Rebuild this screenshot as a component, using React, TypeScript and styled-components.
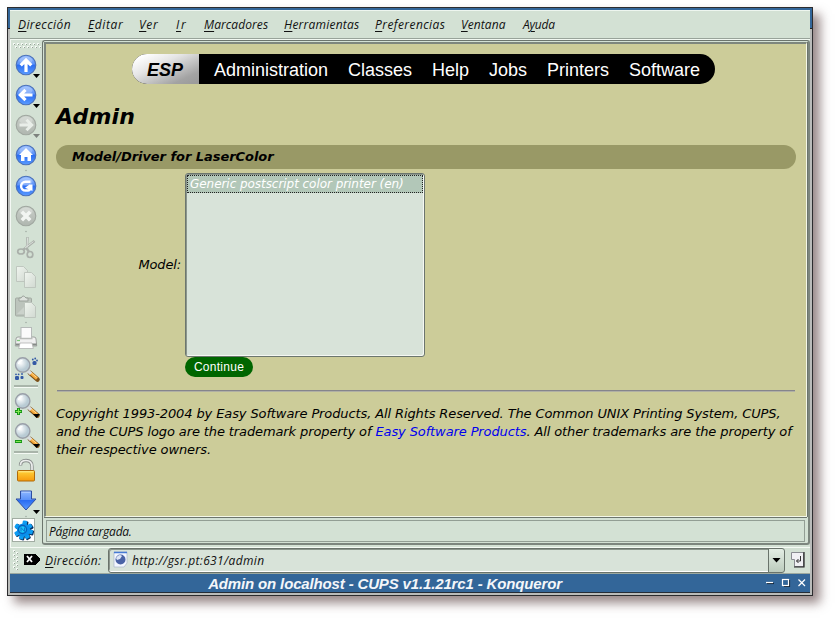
import React from 'react';
import styled, { createGlobalStyle } from 'styled-components';

const GlobalStyle = createGlobalStyle`
  * { box-sizing: border-box; }
  body { margin: 0; background: #fff; overflow: hidden; }
`;

const mint = '#d3e1d4';
const uiFont = "'Open Sans', 'Noto Sans', sans-serif";
const pageFont = "'DejaVu Sans', sans-serif";

const Desktop = styled.div`
  width: 836px;
  height: 619px;
  padding: 7px;
  background: #fff;
`;

const Window = styled.main`
  width: 806px;
  height: 589px;
  padding: 2px;
  display: flex;
  flex-direction: column;
  border: 1px solid #2c2c2e;
  background: linear-gradient(#336699 20px, #222 20px, #222 21px, #babcba 21px);
  box-shadow: 7px 7px 10px rgba(73, 45, 45, 0.57);
`;

const MenuBar = styled.nav`
  height: 30px;
  flex: none;
  display: flex;
  padding: 4px 0 0 8px;
  background: ${mint};
  border-top: 1px solid #eef6ef;
  border-bottom: 1px solid #f1f8f1;
  box-shadow: inset 0 -1px #98a39a;
`;

const MenuItem = styled.span<{ $width: number; $spacing: number }>`
  width: ${p => p.$width}px;
  flex: none;
  white-space: nowrap;
  font: italic 12px/19px ${uiFont};
  letter-spacing: ${p => p.$spacing}px;
  color: #111;
`;

const Accel = styled.span`
  text-decoration: underline;
  text-underline-offset: 2px;
  text-decoration-thickness: 1px;
`;

const Middle = styled.div`
  height: 507px;
  flex: none;
  display: flex;
  background: ${mint};
`;

const ToolBar = styled.aside`
  width: 32px;
  flex: none;
  display: flex;
  flex-direction: column;
  border-left: 1px solid #f4f8f4;
`;

const Slot = styled.div<{ $height: number }>`
  height: ${p => p.$height}px;
  flex: none;
  svg { display: block; margin-left: -1px; overflow: visible; }
`;

const Divider = styled.div`
  height: 6px;
  padding-top: 1px;
  &::after {
    content: '';
    display: block;
    height: 2px;
    margin: 0 4px 0 3px;
    background: #a9b5aa;
    border-bottom: 1px solid #f4faf4;
  }
`;

const GearBox = styled.div`
  width: 23px;
  height: 24px;
  margin: 3px 0 0 1px;
  background: #fff;
  border: 1px solid #a1aca2;
`;

const Frame = styled.section`
  width: 768px;
  height: 505px;
  flex: none;
  padding: 1px 0 1px 1px;
  border: 1px solid #6c756d;
  border-right: 2px solid #7c867e;
  border-bottom: 2px solid #7c867e;
  border-radius: 3px;
`;

const Page = styled.article`
  height: 475px;
  margin-right: 1px;
  padding: 10px 10px 0;
  font: italic 13px/18px ${pageFont};
  color: #000;
  background: #cccc99;
  border: 2px solid #7d867d;
  border-right: 1px solid #f4f8e8;
  border-bottom: 1px solid #f4f8e8;
  box-shadow: 0 1px #6c756d, 1px 0 #6c756d;
`;

const Nav = styled.nav`
  width: 583px;
  height: 30px;
  margin-left: 76px;
  display: flex;
  overflow: hidden;
  border-radius: 15px;
  background: #000;
  color: #fff;
  font: normal 18px/33px 'Liberation Sans', sans-serif;
`;

const Brand = styled.b`
  width: 67px;
  padding-left: 15px;
  margin-right: 15px;
  color: #000;
  background: linear-gradient(155deg, #fff 10%, #e5e5e5 38%, #a3a3a3 80%, #999);
  font: italic bold 18px/32px 'Liberation Sans', sans-serif;
`;

const NavLink = styled.span<{ $width: number }>`
  width: ${p => p.$width}px;
  flex: none;
  white-space: nowrap;
`;

const Heading = styled.h1`
  margin: 20px 0 0;
  font: italic bold 22px/26px ${pageFont};
  letter-spacing: 0.2px;
`;

const Section = styled.h2`
  height: 24px;
  margin: 15px 0 4px;
  padding-left: 16px;
  border-radius: 12px;
  background: #999966;
  font: italic bold 13px/23px ${pageFont};
  letter-spacing: -0.05px;
`;

const FormRow = styled.div`
  display: flex;
  align-items: center;
`;

const Label = styled.label`
  width: 129px;
  padding-right: 4px;
  text-align: right;
  letter-spacing: -0.15px;
`;

const ListBox = styled.div`
  width: 240px;
  height: 184px;
  padding: 1px;
  border: 1px solid #6c766e;
  border-radius: 3px;
  background: #d8e3d9;
  box-shadow: inset -1px -1px #f5f8f3, inset 1px 1px #8b968d;
`;

const Option = styled.div`
  height: 18px;
  padding-left: 2px;
  white-space: nowrap;
  font: italic 12px/17px ${pageFont};
  letter-spacing: -0.05px;
  color: #fff;
  background: #b2c7b8;
  border: 1px dotted #222;
`;

const Continue = styled.button`
  display: block;
  width: 68px;
  height: 20px;
  margin-left: 129px;
  padding: 0;
  border: 0;
  border-radius: 10px;
  color: #fff;
  background: #006600;
  font: 12px/20px 'Liberation Sans', sans-serif;
  letter-spacing: 0.27px;
`;

const Rule = styled.hr`
  height: 2px;
  margin: 13px 1px 13px 1px;
  border: 0;
  border-top: 1px solid #85858c;
  background: #b0b0a4;
`;

const Copyright = styled.p`
  margin: 0;
  white-space: nowrap;
  letter-spacing: -0.11px;
`;

const Link = styled.a`
  color: #0000ee;
`;

const Status = styled.footer`
  height: 22px;
  margin: 3px 3px 0 2px;
  padding-left: 2px;
  border: 1px solid #929e94;
  font: italic 12px/21px ${uiFont};
  letter-spacing: -0.25px;
  color: #111;
`;

const LocationBar = styled.div`
  height: 27px;
  flex: none;
  display: flex;
  align-items: flex-start;
  background: ${mint};
  border-top: 1px solid #f4faf4;
  border-bottom: 1px solid #9da99f;
  svg { flex: none; display: block; }
`;

const LocationLabel = styled.span`
  width: 63px;
  flex: none;
  font: italic 12px/25px ${uiFont};
  letter-spacing: 0.4px;
  color: #111;
`;

const Address = styled.div`
  width: 661px;
  height: 25px;
  margin-right: -1px;
  display: flex;
  padding-left: 3px;
  border: 1px solid #69736b;
  border-radius: 3px 0 0 3px;
  background: #d8e3d9;
  box-shadow: inset 0 -1px #fff, inset 1px 1px #8a958c;
  font: italic 12px/24px ${uiFont};
  color: #111;
`;

const UrlText = styled.span`
  margin-left: 3px;
  letter-spacing: 0.35px;
`;

const DropButton = styled.div`
  width: 17px;
  height: 25px;
  margin-right: 4px;
  border: 1px solid #69736b;
  border-radius: 0 3px 3px 0;
  background: linear-gradient(#e3eee4, #bccbbd);
`;

const TitleBar = styled.header`
  height: 19px;
  flex: none;
  display: flex;
  background: #336699;
  border-bottom: 1px solid #252d37;
`;

const Title = styled.div`
  width: 750px;
  text-align: center;
  color: #f4f6f9;
  font: italic bold 15px/20px 'Liberation Sans', sans-serif;
  letter-spacing: -0.15px;
`;

const Gradients = () => (
  <svg width="0" height="0">
    <defs>
      <linearGradient id="blue" x2="0" y2="1"><stop stopColor="#8db7ff" /><stop offset=".45" stopColor="#5d93f8" /><stop offset=".5" stopColor="#2a6df2" /><stop offset="1" stopColor="#5b9cff" /></linearGradient>
      <linearGradient id="grey" x2="0" y2="1"><stop stopColor="#c9cfc9" /><stop offset="1" stopColor="#afb6af" /></linearGradient>
      <linearGradient id="paper" x2="1" y2="1"><stop stopColor="#f0f5ef" /><stop offset="1" stopColor="#d1d9d1" /></linearGradient>
      <radialGradient id="lens" cx=".35" cy=".35"><stop stopColor="#fff" /><stop offset="1" stopColor="#b9cbd4" /></radialGradient>
      <linearGradient id="gold" x2="0" y2="1"><stop stopColor="#ffd33a" /><stop offset="1" stopColor="#f79a0d" /></linearGradient>
    </defs>
  </svg>
);

const Caret = ({ dim }: { dim?: boolean }) => <path d="M23 24h7l-3.5 4z" fill={dim ? '#7d827e' : '#000'} />;
const Dot = () => <circle cx="16" cy="30.5" r=".7" fill="#98a399" />;

const Disc = ({ off, children }: { off?: boolean; children: React.ReactNode }) => (
  <g>
    <circle cx="16" cy="15" r="9.8" fill={off ? 'url(#grey)' : 'url(#blue)'} stroke={off ? '#9fa69f' : '#4a70b8'} strokeWidth="1.1" />
    <ellipse cx="16" cy="10.5" rx="6.5" ry="4" fill="#fff" opacity=".25" />
    {children}
  </g>
);

const Magnifier = () => (
  <g>
    <path d="M20 19l7.5 6.5" stroke="#7b5018" strokeWidth="4.6" strokeLinecap="round" />
    <path d="M20.5 19l6.5 5.7" stroke="#f6a838" strokeWidth="3" />
    <path d="M20.5 18.2l6 5.2" stroke="#ffd891" strokeWidth="1" />
    <path d="M18 17l3 2.8" stroke="#d9dde0" strokeWidth="3.4" />
    <circle cx="12.7" cy="11" r="7.2" fill="url(#lens)" stroke="#9a9fa8" strokeWidth="1.4" />
    <path d="M8.5 10q1-3.5 4-3.5" stroke="#fff" fill="none" strokeWidth="1.5" />
  </g>
);

const leaf = (x: number, y: number) => (
  <path transform={`translate(${x} ${y})`} d="M0 0h7l4 4v11H0z" fill="url(#paper)" stroke="#bbc3bb" strokeWidth=".9" />
);

const drawings: Record<string, React.ReactNode> = {
  up: <><Disc><path d="M16 22v-11M10.7 15.3L16 10l5.3 5.3" fill="none" stroke="#fff" strokeWidth="3.2" /></Disc><Caret /></>,
  back: <><Disc><path d="M22.5 15H11M15.5 9.8L10.3 15l5.2 5.2" fill="none" stroke="#fff" strokeWidth="3.2" /></Disc><Caret /></>,
  forward: <><Disc off><path d="M9.5 15H21M16.5 9.8l5.2 5.2-5.2 5.2" fill="none" stroke="#e9eee9" strokeWidth="3" /></Disc><Caret dim /></>,
  home: <><Disc><path d="M16 8l7 7h-2v6h-3.5v-4h-3v4H11v-6H9z" fill="#fff" /></Disc><Dot /></>,
  reload: <Disc><path d="M20.5 10.8h-5a4.4 4.4 0 1 0 0 8.800h2.500q2 0 2-2.500" fill="none" stroke="#fff" strokeWidth="2.5" /><path d="M15 16.800l4.500-3.300h3V20z" fill="#fff" /></Disc>,
  stop: <><Disc off><path d="M11.8 10.8l8.4 8.4M20.2 10.8l-8.4 8.4" stroke="#f2f5f2" strokeWidth="3.6" /></Disc><Dot /></>,
  cut: <g fill="none" stroke="#aab0aa"><path d="M17.5 4l-.5 12 2 3M24.5 8L13 17" strokeWidth="2.4" /><path d="M17.6 4.5l-.6 10M23.5 8.6L15 15" stroke="#dde2dd" /><ellipse cx="11" cy="18.5" rx="3.3" ry="2.5" strokeWidth="1.7" /><ellipse cx="20" cy="21.5" rx="2.8" ry="3" strokeWidth="1.7" /></g>,
  copy: <>{leaf(6.5, 4.5)}{leaf(14.5, 10.5)}</>,
  paste: <><rect x="5.5" y="6" width="16" height="18" rx="1" fill="#bcc4bc" stroke="#a3aba3" /><path d="M9 8V6h2q2-4 5 0h2v3H9z" fill="#dde2dd" stroke="#9aa19a" /><path d="M7 22L20 9v13z" fill="#cbd2cb" />{leaf(14.5, 10.5)}<Dot /></>,
  print: <><path d="M6 16q0-2 2-2h16q2 0 2 2l.7 7H5.3z" fill="#f0f0f0" stroke="#9da19e" /><rect x="11" y="4.5" width="10.5" height="11" fill="#fbfbfb" stroke="#b6bab9" /><path d="M9.5 15.5h13" stroke="#b9bcb9" strokeWidth="1.5" /><path d="M6 20.5h20.5v2H6z" fill="#858a86" /><path d="M10 20h12l1.3 5.5H8.7z" fill="#fff" stroke="#aaa" strokeWidth=".7" /><path d="M7 17.5h3" stroke="#7cc878" strokeWidth="1.3" /></>,
  find: <><Magnifier /><g fill="#3158a5"><rect x="22.5" y="7" width="4" height="4" rx="1.5" /><circle cx="22.8" cy="5.5" r=".9" /><circle cx="25.2" cy="4.5" r=".9" /><circle cx="27" cy="6.5" r=".9" /><rect x="5" y="22" width="4" height="4" rx="1.3" /><circle cx="6" cy="20.3" r=".9" /><circle cx="8.6" cy="20.3" r=".9" /><rect x="10.5" y="22" width="3" height="3" rx="1" /><circle cx="12" cy="20" r=".9" /></g></>,
  zoomIn: <><Magnifier /><path d="M5 21.5h7M8.5 18v7" stroke="#159716" strokeWidth="3" /><path d="M5.8 21.5h5.4M8.5 18.8v5.4" stroke="#84e850" /><Caret /></>,
  zoomOut: <><Magnifier /><path d="M5 21.5h7" stroke="#159716" strokeWidth="3" /><path d="M5.8 21.5h5.4" stroke="#84e850" /><Caret /></>,
  lock: <><path d="M10.5 9.5q0-5 5.5-5 6 0 6 6v5" fill="none" stroke="#8a908e" strokeWidth="3.4" /><path d="M10.5 9q0-4.5 5.5-4.5 6 0 6 6v5" fill="none" stroke="#eceeed" strokeWidth="1.7" /><rect x="7.5" y="14.5" width="17" height="10.5" rx="1" fill="url(#gold)" stroke="#b06a09" /><path d="M8.5 15.8h15" stroke="#ffeb91" /></>,
  down: <><path d="M10.5 5h11v8H26L16 24 6 13h4.5z" fill="url(#blue)" stroke="#2c4da1" /><path d="M11.5 6.2h9" stroke="#b9d1ff" /><Caret /><Dot /></>,
};

const tools: [string, number][] = [
  ['up', 30], ['back', 30], ['forward', 30], ['home', 31], ['reload', 30], ['stop', 32],
  ['cut', 29], ['copy', 30], ['paste', 31], ['print', 31], ['find', 30], ['|', 0],
  ['zoomIn', 30], ['zoomOut', 30], ['|', 0], ['lock', 30], ['down', 29],
];

const menus: [string, string, string, number, number][] = [
  ['', 'D', 'irección', 70, 0.4], ['', 'E', 'ditar', 51, 0.6], ['', 'V', 'er', 37, 0.7], ['', 'I', 'r', 28, 1.8],
  ['', 'M', 'arcadores', 80, 0.08], ['', 'H', 'erramientas', 91, 0.22], ['', 'P', 'referencias', 86, 0.42],
  ['', 'V', 'entana', 62, 0.08], ['A', 'y', 'uda', 40, -0.2],
];

const links: [string, number][] = [
  ['Administration', 134], ['Classes', 84], ['Help', 57], ['Jobs', 58], ['Printers', 82], ['Software', 80],
];

const Handle = () => (
  <svg width="32" height="10" shapeRendering="crispEdges">
    {[0, 1, 2, 3, 4, 5, 6].map(i => (
      <g key={i}>
        <path d={`M${3 + i * 4} 3h2v2h-2zM${5 + i * 4} 6h2v2h-2z`} fill="#f6fbf6" />
        <path d={`M${4 + i * 4} 4h1v1h-1zM${6 + i * 4} 7h1v1h-1z`} fill="#96a198" />
      </g>
    ))}
  </svg>
);

const teeth = [10, 58, 104, 150, 196, 242, 300];

const Gear = () => (
  <svg width="21" height="22" viewBox="0 0 21 22">
    {teeth.map(a => <rect key={a} x="9" y="2" width="5" height="9" rx="1" fill="#06305f" transform={`rotate(${a} 11.3 11.7)`} />)}
    {teeth.map(a => <rect key={a} x="8.3" y="1.5" width="4.4" height="9" rx="1" fill="#0d9df2" transform={`rotate(${a} 10.5 11)`} />)}
    <circle cx="10.5" cy="11" r="6.6" fill="#0a90ec" />
    <circle cx="9.5" cy="10.5" r="4" fill="#1cc8f8" stroke="#075fbb" strokeWidth="1.4" />
    <path d="M8 12.5V8.5l3.5 4V8.5" stroke="#0878d2" fill="none" />
  </svg>
);

export default function App() {
  return (
    <Desktop>
      <GlobalStyle />
      <Window>
        <MenuBar>
          {menus.map(([pre, key, rest, width, spacing]) => (
            <MenuItem key={key + rest} $width={width} $spacing={spacing}>{pre}<Accel>{key}</Accel>{rest}</MenuItem>
          ))}
        </MenuBar>
        <Middle>
          <ToolBar>
            <Slot $height={10}><Handle /></Slot>
            {tools.map(([name, height], i) => name === '|' ? <Divider key={i} /> : (
              <Slot key={name} $height={height}><svg width="32" height="30">{drawings[name]}</svg></Slot>
            ))}
            <GearBox><Gear /></GearBox>
          </ToolBar>
          <Frame>
            <Page>
              <Nav>
                <Brand>ESP</Brand>
                {links.map(([text, width]) => <NavLink key={text} $width={width}>{text}</NavLink>)}
              </Nav>
              <Heading>Admin</Heading>
              <Section>Model/Driver for LaserColor</Section>
              <FormRow>
                <Label>Model:</Label>
                <ListBox><Option>Generic postscript color printer (en)</Option></ListBox>
              </FormRow>
              <Continue>Continue</Continue>
              <Rule />
              <Copyright>
                Copyright 1993-2004 by Easy Software Products, All Rights Reserved. The Common UNIX Printing System, CUPS,<br />
                and the CUPS logo are the trademark property of <Link>Easy Software Products</Link>. All other trademarks are the property of<br />
                their respective owners.
              </Copyright>
            </Page>
            <Status>Página cargada.</Status>
          </Frame>
        </Middle>
        <LocationBar>
          <svg width="35" height="25" shapeRendering="crispEdges">
            {[2, 6, 10, 14, 18].map(y => <g key={y}><path d={`M3 ${y}h2v2h-2zM6 ${y + 2}h2v2h-2z`} fill="#f6fbf6" /><path d={`M4 ${y + 1}h1v1h-1zM7 ${y + 3}h1v1h-1z`} fill="#96a198" /></g>)}
            <path d="M14 6h11l5 5v1l-5 5H14z" fill="#000" />
            <path d="M17 8l5 6M22 8l-5 6" stroke="#fff" strokeWidth="1.8" shapeRendering="auto" />
          </svg>
          <LocationLabel><Accel>D</Accel>irección:</LocationLabel>
          <Address>
            <svg width="17" height="23">
              <path d="M2 3h13v11l-3 4H2z" fill="#f3f7ff" stroke="#a9b5c8" strokeWidth=".7" />
              <path d="M2 3.5h13" stroke="#477bd4" strokeWidth="1.5" />
              <circle cx="8.5" cy="10.5" r="5" fill="#4a63a6" />
              <path d="M4 9q3-5 6-2l-2 3-3 1z" fill="#dde6f5" />
            </svg>
            <UrlText>http://gsr.pt:631/admin</UrlText>
          </Address>
          <DropButton><svg width="15" height="23"><path d="M3.5 9h8l-4 4.5z" /></svg></DropButton>
          <svg width="18" height="25">
            <path d="M2.5 4.5h12v14h-9v-7h-3z" fill="#f0f0f3" stroke="#888b90" />
            <path d="M15 4v15H5" fill="none" stroke="#222" strokeWidth="1.2" />
            <path d="M11.5 8v5h-4M9.5 11l-2 2 2 2" fill="none" stroke="#333" />
          </svg>
        </LocationBar>
        <TitleBar>
          <Title>Admin on localhost - CUPS v1.1.21rc1 - Konqueror</Title>
          <svg width="50" height="18" fill="none" stroke="#fff" strokeWidth="1.2">
            <path d="M7 9.5h7" stroke="#152536" />
            <path d="M6 8.5h7" /><path d="M24 12.5h5.5V6" stroke="#152536" /><rect x="22.5" y="5.5" width="6" height="6" />
            <path d="M38.5 5.5l6.5 6.5M45 5.5l-6.5 6.5" />
          </svg>
        </TitleBar>
      </Window>
      <Gradients />
    </Desktop>
  );
}
